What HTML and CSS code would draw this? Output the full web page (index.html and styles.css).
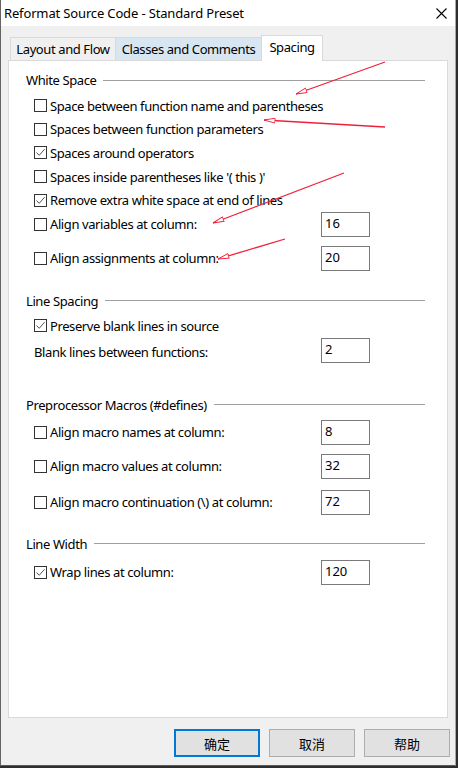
FILE: index.html
```html
<!DOCTYPE html>
<html lang="en">
<head>
<meta charset="utf-8">
<title>Reformat Source Code - Standard Preset</title>
<link rel="stylesheet" href="styles.css">
</head>
<body>
<div class="window">
  <div class="titlebar">
    <span class="title">Reformat Source Code - Standard Preset</span>
    <svg class="close" viewBox="0 0 11 11"><path d="M0.5 0.5 L10.5 10.5 M10.5 0.5 L0.5 10.5" stroke="#000" stroke-width="1.1" fill="none"/></svg>
  </div>
  <div class="content">
    <div class="tabs">
      <div class="tab t-layout">Layout and Flow</div>
      <div class="tab t-classes hover">Classes and Comments</div>
      <div class="tab t-spacing active">Spacing</div>
    </div>
    <div class="panel">
      <section class="group g-ws">
        <div class="group-title"><span>White Space</span><span class="rule"></span></div>
        <div class="checks">
          <label class="check-row"><span class="cb"></span><span>Space between function name and parentheses</span></label>
          <label class="check-row"><span class="cb"></span><span>Spaces between function parameters</span></label>
          <label class="check-row"><span class="cb on"><svg viewBox="0 0 11 11"><path d="M1.5 5.5 L4.2 8.3 L9.6 2.2" stroke="#555" stroke-width="1" fill="none"/></svg></span><span>Spaces around operators</span></label>
          <label class="check-row"><span class="cb"></span><span>Spaces inside parentheses like '( this )'</span></label>
          <label class="check-row"><span class="cb on"><svg viewBox="0 0 11 11"><path d="M1.5 5.5 L4.2 8.3 L9.6 2.2" stroke="#555" stroke-width="1" fill="none"/></svg></span><span>Remove extra white space at end of lines</span></label>
        </div>
        <div class="field-row"><label class="opt"><span class="cb"></span><span>Align variables at column:</span></label><div class="num">16</div></div>
        <div class="field-row r-gap9"><label class="opt"><span class="cb"></span><span>Align assignments at column:</span></label><div class="num">20</div></div>
      </section>

      <section class="group g-ls">
        <div class="group-title"><span>Line Spacing</span><span class="rule"></span></div>
        <label class="check-row r-preserve"><span class="cb on"><svg viewBox="0 0 11 11"><path d="M1.5 5.5 L4.2 8.3 L9.6 2.2" stroke="#555" stroke-width="1" fill="none"/></svg></span><span>Preserve blank lines in source</span></label>
        <div class="field-row"><span class="plain">Blank lines between functions:</span><div class="num">2</div></div>
      </section>

      <section class="group g-pp">
        <div class="group-title"><span>Preprocessor Macros (#defines)</span><span class="rule"></span></div>
        <div class="field-row r-first"><label class="opt"><span class="cb"></span><span>Align macro names at column:</span></label><div class="num">8</div></div>
        <div class="field-row r-gap9"><label class="opt"><span class="cb"></span><span>Align macro values at column:</span></label><div class="num">32</div></div>
        <div class="field-row r-gap11"><label class="opt"><span class="cb"></span><span>Align macro continuation (\) at column:</span></label><div class="num">72</div></div>
      </section>

      <section class="group g-lw">
        <div class="group-title"><span>Line Width</span><span class="rule"></span></div>
        <div class="field-row r-first6"><label class="opt"><span class="cb on"><svg viewBox="0 0 11 11"><path d="M1.5 5.5 L4.2 8.3 L9.6 2.2" stroke="#555" stroke-width="1" fill="none"/></svg></span><span>Wrap lines at column:</span></label><div class="num">120</div></div>
      </section>
    </div>
    <div class="buttons">
      <button class="btn default">确定</button>
      <button class="btn">取消</button>
      <button class="btn">帮助</button>
    </div>
  </div>
</div>
<svg class="annot" width="458" height="768" viewBox="0 0 458 768">
  <defs>
    <marker id="ah" viewBox="0 0 12 6" refX="11.5" refY="3" markerWidth="12" markerHeight="6" markerUnits="userSpaceOnUse" orient="auto">
      <path d="M0.5 0.6 L11.5 3 L0.5 5.4 Z" fill="#fff" stroke="#f0203a" stroke-width="0.9"/>
    </marker>
  </defs>
  <g stroke="#f0203a" stroke-width="1.3" fill="none" marker-end="url(#ah)">
    <line x1="385" y1="62" x2="296" y2="94"/>
    <line x1="385" y1="127" x2="264" y2="120"/>
    <line x1="344" y1="173" x2="213" y2="223"/>
    <line x1="285" y1="239" x2="218" y2="259"/>
  </g>
</svg>
</body>
</html>
```

FILE: styles.css
```css
* { box-sizing: border-box; }
html, body { margin: 0; padding: 0; }
body {
  position: relative;
  width: 458px;
  height: 768px;
  overflow: hidden;
  background: #2e2e2e;
  font-family: "Noto Sans", "Noto Sans CJK SC", sans-serif;
  font-size: 13px;
  letter-spacing: -0.4px;
  color: #000;
}
.window {
  width: 456px;
  height: 766px;
  background: #f0f0f0;
  border-left: 1px solid #646464;
  border-right: 1px solid #a8a8a8;
  border-bottom: 1px solid #5a5a5a;
  display: flex;
  flex-direction: column;
}
.titlebar {
  height: 26px;
  flex: none;
  background: #fff;
  display: flex;
  align-items: center;
  justify-content: space-between;
  padding: 0 8px 0 3px;
}
.title { font-size: 13px; letter-spacing: -0.15px; }
.close { width: 11px; height: 11px; }
.content {
  flex: 1;
  display: flex;
  flex-direction: column;
  padding-top: 9px;
}
.tabs {
  height: 25px;
  display: flex;
  align-items: flex-end;
  margin-left: 9px;
  position: relative;
  z-index: 2;
}
.tab {
  height: 23px;
  border: 1px solid #d9d9d9;
  border-bottom: none;
  background: #f0f0f0;
  display: flex;
  align-items: center;
  justify-content: center;
  padding-bottom: 1px;
}
.tab + .tab { margin-left: -1px; }
.t-layout { width: 106px; }
.t-classes { width: 147px; }
.t-spacing { width: 62px; }
.tab.hover { background: #d8e6f2; }
.tab.active {
  height: 26px;
  margin-bottom: -1px;
  background: #fff;
  padding-bottom: 3px;
}
.panel {
  width: 440px;
  height: 658px;
  margin-left: 7px;
  background: #fff;
  border: 1px solid #d9d9d9;
  padding: 9px 22px 0 17px;
  display: flex;
  flex-direction: column;
}
.group-title {
  height: 20px;
  display: flex;
  align-items: center;
}
.group-title .rule {
  flex: 1;
  height: 1px;
  background: #a0a0a0;
  margin-left: 7px;
}
.checks {
  margin-top: 4px;
  padding-left: 8px;
}
.check-row {
  height: 23.6px;
  display: flex;
  align-items: center;
}
.cb {
  width: 13px;
  height: 13px;
  flex: none;
  border: 1px solid #333;
  background: #fff;
  margin-right: 3px;
  display: flex;
}
.cb svg { width: 11px; height: 11px; }
.field-row {
  height: 25px;
  padding-left: 8px;
  display: grid;
  grid-template-columns: 287px 49px;
  align-items: center;
}
.opt { display: flex; align-items: center; }
.plain { padding-top: 4px; }
.r-gap9 { margin-top: 9px; }
.r-gap11 { margin-top: 11px; }
.r-first { margin-top: 5px; }
.r-first6 { margin-top: 6px; }
.num {
  height: 25px;
  border: 1px solid #7a7a7a;
  background: #fff;
  padding: 1px 3px 0;
  line-height: 18px;
  letter-spacing: 0;
}
.g-ls { margin-top: 20px; }
.g-ls .r-preserve { margin-top: 3px; padding-left: 8px; height: 24px; }
.g-pp { margin-top: 32px; }
.g-lw { margin-top: 19px; }
.buttons {
  display: flex;
  justify-content: flex-end;
  gap: 9px;
  margin-top: 11px;
  padding-right: 5px;
}
.btn {
  width: 86px;
  height: 28px;
  background: #e1e1e1;
  border: 1px solid #adadad;
  font-family: "Noto Sans CJK SC", sans-serif;
  font-size: 13px;
  letter-spacing: 0;
  color: #000;
  padding: 0;
}
.btn.default { border: 2px solid #0078d7; }
.annot {
  position: absolute;
  top: 0;
  left: 0;
  pointer-events: none;
}
```
